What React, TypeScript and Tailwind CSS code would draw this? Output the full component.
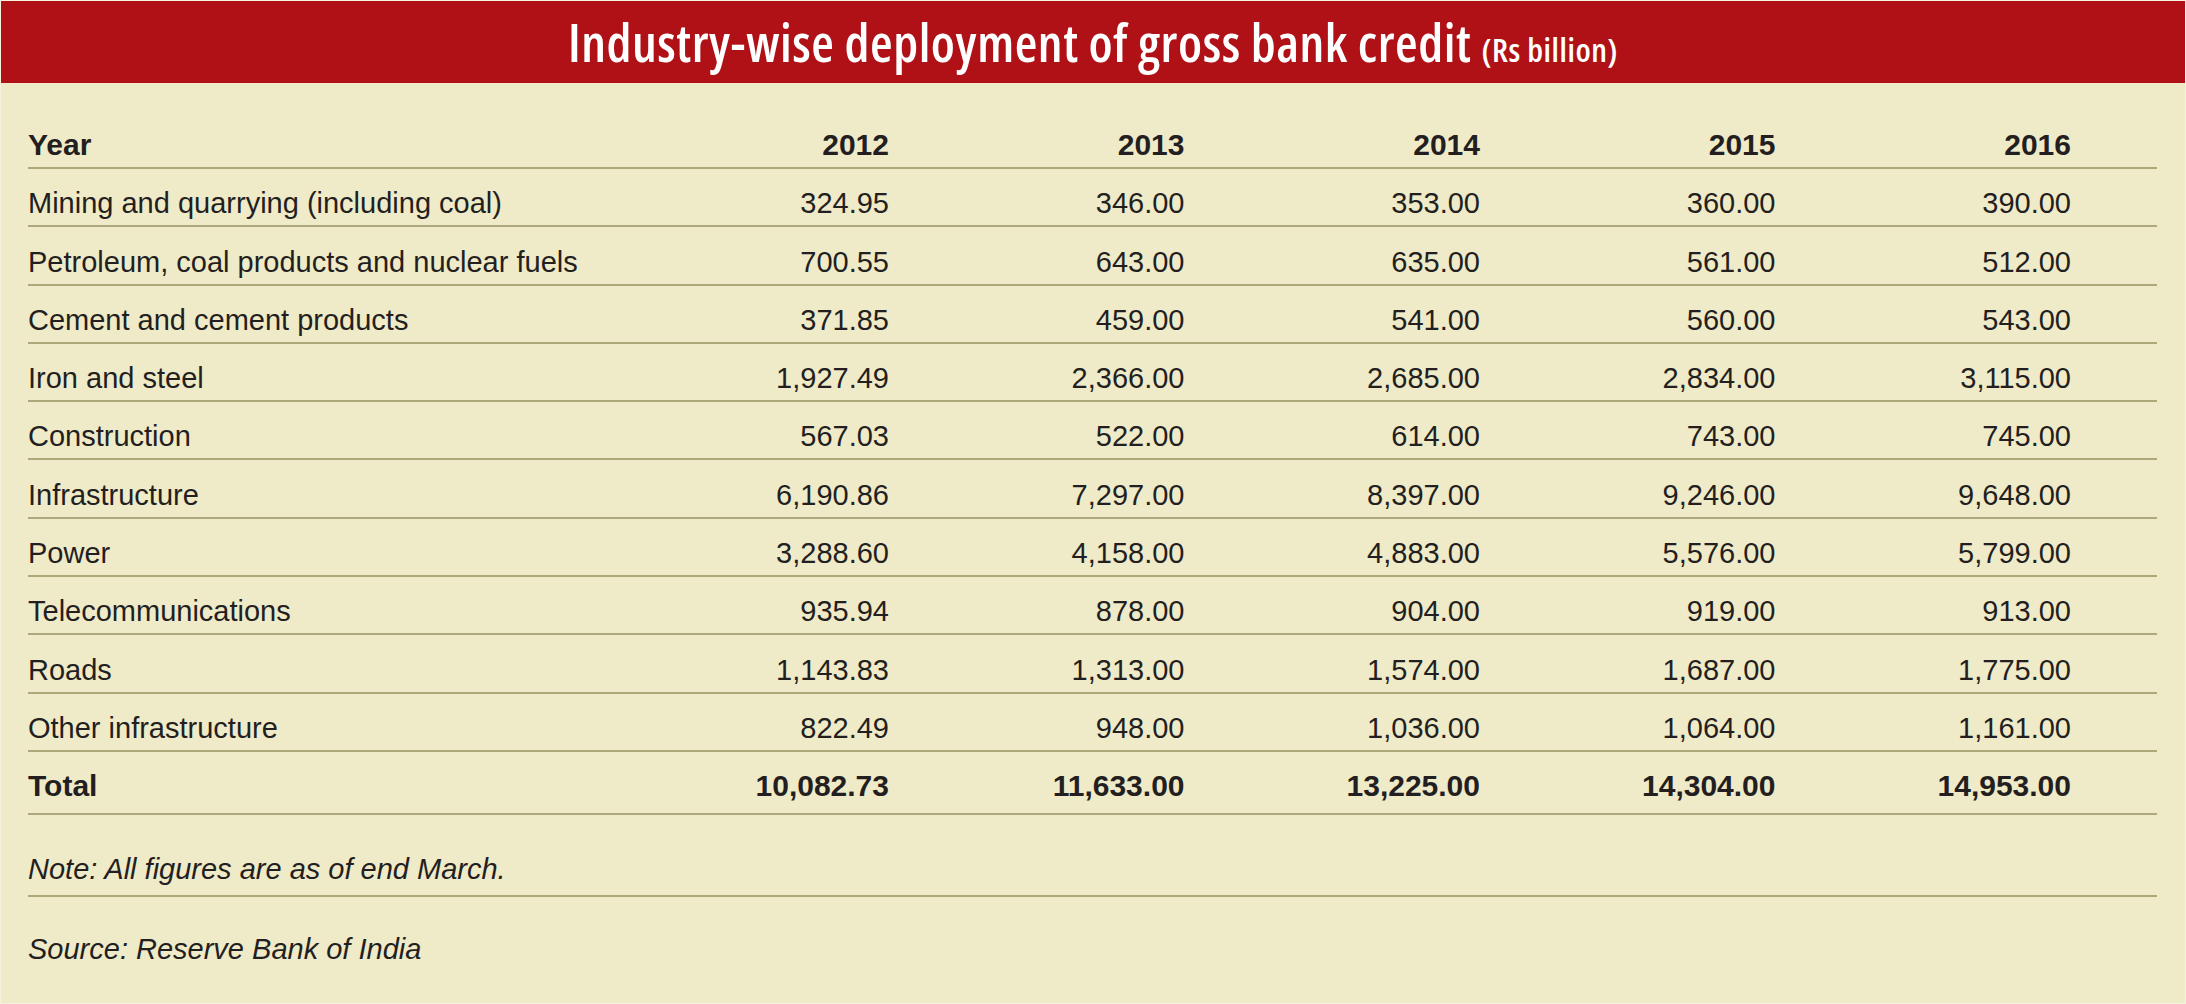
import React from 'react';

const years = ['2012', '2013', '2014', '2015', '2016'];

const rows: [string, string[]][] = [
  ['Mining and quarrying (including coal)', ['324.95', '346.00', '353.00', '360.00', '390.00']],
  ['Petroleum, coal products and nuclear fuels', ['700.55', '643.00', '635.00', '561.00', '512.00']],
  ['Cement and cement products', ['371.85', '459.00', '541.00', '560.00', '543.00']],
  ['Iron and steel', ['1,927.49', '2,366.00', '2,685.00', '2,834.00', '3,115.00']],
  ['Construction', ['567.03', '522.00', '614.00', '743.00', '745.00']],
  ['Infrastructure', ['6,190.86', '7,297.00', '8,397.00', '9,246.00', '9,648.00']],
  ['Power', ['3,288.60', '4,158.00', '4,883.00', '5,576.00', '5,799.00']],
  ['Telecommunications', ['935.94', '878.00', '904.00', '919.00', '913.00']],
  ['Roads', ['1,143.83', '1,313.00', '1,574.00', '1,687.00', '1,775.00']],
  ['Other infrastructure', ['822.49', '948.00', '1,036.00', '1,064.00', '1,161.00']],
];

const total = ['10,082.73', '11,633.00', '13,225.00', '14,304.00', '14,953.00'];

// label column + five year columns + empty tail up to the rule's end
const grid = 'grid grid-cols-[565.5px_repeat(5,295.5px)_1fr] border-b-2 border-[#aca87a]';

const App = () => {
  return (
    <div className="w-[2186px] h-[1004px] overflow-hidden bg-[#efeac8] text-[#231f20] font-['Liberation_Sans',Arial,sans-serif] border border-white/40">
      <div className="h-[82px] bg-[#b01117] flex items-center justify-center text-white">
        <h1 className="font-['Open_Sans',sans-serif] font-semibold font-stretch-condensed text-[52px] tracking-[0.55px] leading-none">
          Industry-wise deployment of gross bank credit{' '}
          <span className="text-[33px]">(Rs billion)</span>
        </h1>
      </div>

      <div className="pl-[27px] pr-[28px]">
        <div className={`${grid} h-[86px] items-end pb-[7px] font-bold text-[30px] leading-none`}>
          <div>Year</div>
          {years.map((y) => (
            <div key={y} className="text-right">{y}</div>
          ))}
          <div />
        </div>

        {rows.map(([label, values]) => (
          <div key={label} className={`${grid} h-[58.3px] items-end pb-[7px] text-[29px] leading-none`}>
            <div>{label}</div>
            {values.map((v, i) => (
              <div key={i} className="text-right">{v}</div>
            ))}
            <div />
          </div>
        ))}

        <div className={`${grid} h-[63.5px] items-end pb-[12px] font-bold text-[30px] leading-none`}>
          <div>Total</div>
          {total.map((v, i) => (
            <div key={i} className="text-right">{v}</div>
          ))}
          <div />
        </div>

        <div className="h-[81.5px] flex items-end pb-[11px] border-b-2 border-[#aca87a] italic text-[29px] leading-none">
          Note: All figures are as of end March.
        </div>
        <div className="mt-[38px] italic text-[29px] leading-none">Source: Reserve Bank of India</div>
      </div>
    </div>
  );
};

export default App;
